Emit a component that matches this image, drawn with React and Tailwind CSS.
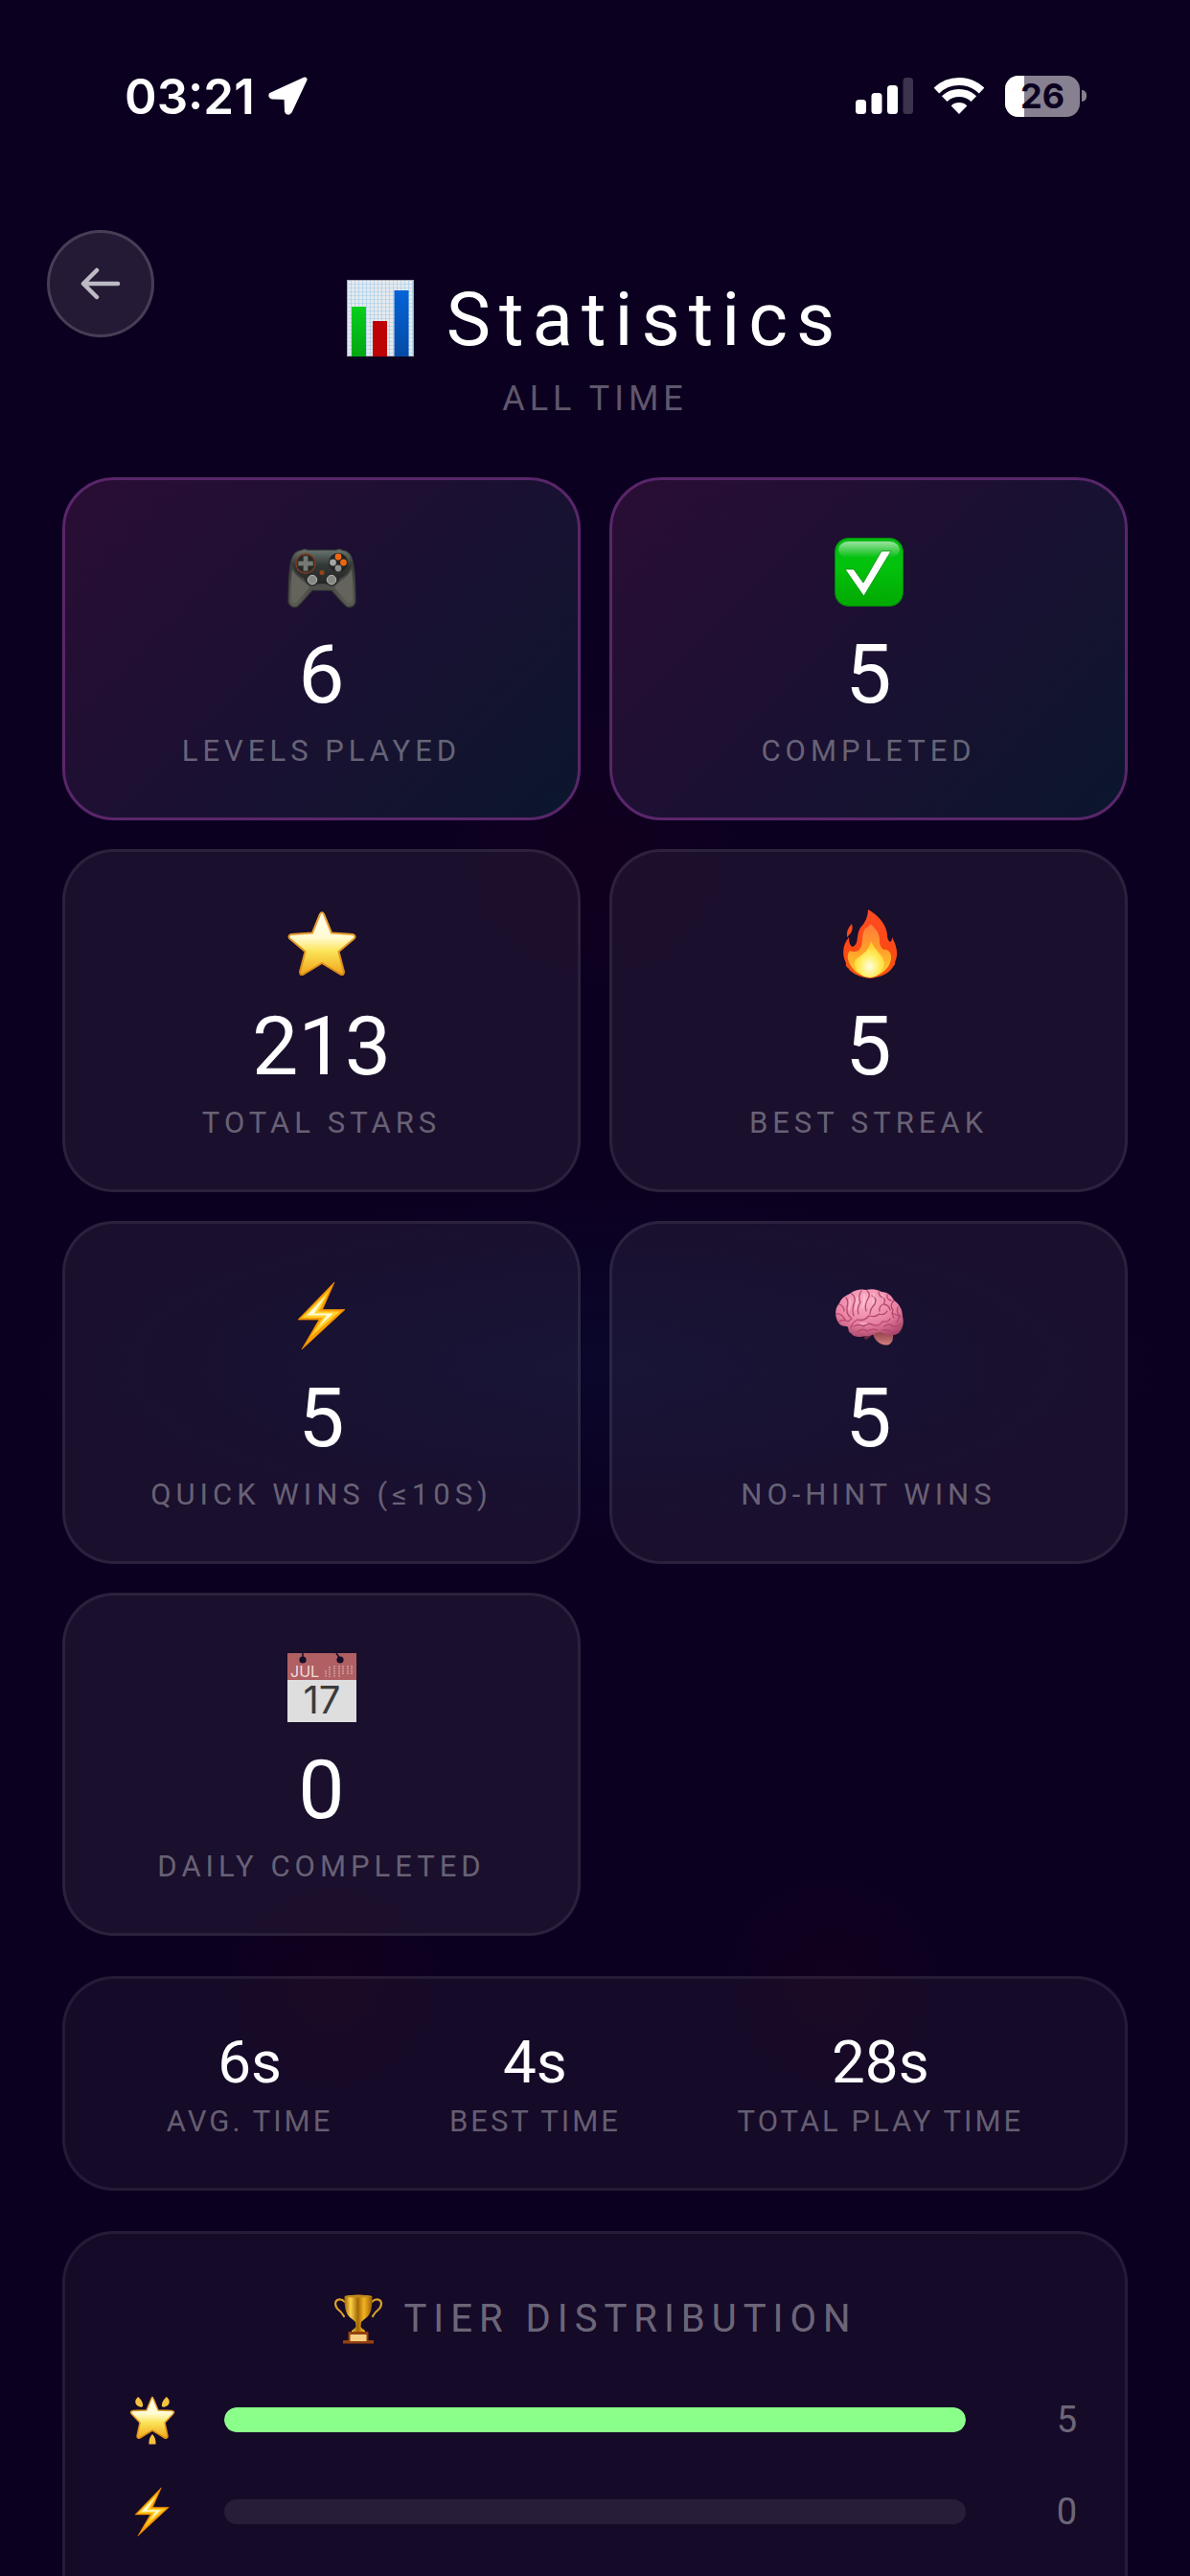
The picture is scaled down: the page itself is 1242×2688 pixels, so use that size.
import clsx from 'clsx';

/* ---------- Status bar icons ---------- */

const LocationIcon = () => (
    <svg viewBox="0 0 41 40" className="w-[41px] h-10" aria-hidden="true">
        <path d="M38 3 L3 19 Q2.500 20.500 4 21 L19 21.500 L19.500 36 Q20.500 38.500 22.500 36 Z" fill="#fff" stroke="#fff" strokeWidth="5" strokeLinejoin="round" />
    </svg>
);

const SignalIcon = () => (
    <svg viewBox="0 0 60 38" className="w-[60px] h-[38px]" aria-hidden="true">
        <rect x="0" y="23" width="11" height="15" rx="3.500" fill="#fff" />
        <rect x="16.500" y="16" width="11" height="22" rx="3.500" fill="#fff" />
        <rect x="33" y="8" width="11" height="30" rx="3.500" fill="#fff" />
        <rect x="49.500" y="0" width="10.500" height="38" rx="3.500" fill="#fff" fillOpacity="0.2" />
    </svg>
);

const WifiIcon = () => (
    <svg viewBox="0 0 52 38" className="w-[52px] h-[38px]" aria-hidden="true">
        <path d="M2.400 13.600 A34 34 0 0 1 49.600 13.600" fill="none" stroke="#fff" strokeWidth="8" />
        <path d="M10.700 22.200 A22 22 0 0 1 41.300 22.200" fill="none" stroke="#fff" strokeWidth="8" />
        <path d="M26 38 L17.700 29.400 A12 12 0 0 1 34.300 29.400 Z" fill="#fff" />
    </svg>
);

const Battery = ({ level }) => (
    <div className="flex items-center gap-[2px]">
        <div className="relative flex items-center justify-center w-[78px] h-[43px] rounded-[14px] overflow-hidden bg-white/50">
            <div className="absolute inset-y-0 left-0 bg-white" style={{ width: `${level}%` }} />
            <span className="relative font-['Inter',sans-serif] font-bold text-[36px] leading-none text-[#0c0020]">{level}</span>
        </div>
        <div className="w-[5px] h-3 rounded-r-full bg-white/50" />
    </div>
);

const BackArrow = () => (
    <svg viewBox="0 0 42 34" className="w-[42px] h-[34px]" fill="none" stroke="currentColor" strokeWidth="4.500" strokeLinecap="round" strokeLinejoin="round" aria-hidden="true">
        <path d="M39 17 H3 M17 3 L3 17 L17 31" />
    </svg>
);

/* ---------- Emoji style icons ---------- */

const ChartEmoji = ({ className }) => (
    <svg viewBox="0 0 70 80" className={className} aria-hidden="true">
        <defs>
            <pattern id="chart-grid" width="4" height="4" patternUnits="userSpaceOnUse">
                <rect width="4" height="4" fill="#e6eaee" />
                <path d="M0 0 H4 M0 0 V4" stroke="#9fcbea" strokeWidth="1.200" />
            </pattern>
            <linearGradient id="chart-green" x1="0" y1="0" x2="0" y2="1">
                <stop offset="0" stopColor="#06cf1c" />
                <stop offset="1" stopColor="#04a614" />
            </linearGradient>
            <linearGradient id="chart-blue" x1="0" y1="0" x2="0" y2="1">
                <stop offset="0" stopColor="#0464d6" />
                <stop offset="1" stopColor="#044aa6" />
            </linearGradient>
        </defs>
        <rect x="0.500" y="0.500" width="69" height="79" fill="url(#chart-grid)" stroke="#a9a9b0" />
        <rect x="5" y="28" width="15" height="52" fill="url(#chart-green)" />
        <rect x="27" y="43" width="15" height="37" fill="#bd0303" />
        <rect x="49.500" y="11" width="15" height="69" fill="url(#chart-blue)" />
    </svg>
);

const GamepadEmoji = ({ className }) => (
    <svg viewBox="0 0 72 72" className={clsx(className, 'overflow-visible')} aria-hidden="true">
        <defs>
            <linearGradient id="pad-shell" x1="0" y1="0" x2="0" y2="1">
                <stop offset="0" stopColor="#6f716b" />
                <stop offset="0.250" stopColor="#3c3e3b" />
                <stop offset="1" stopColor="#5c5c56" />
            </linearGradient>
            <linearGradient id="pad-top" x1="0" y1="0" x2="0" y2="1">
                <stop offset="0" stopColor="#64706b" />
                <stop offset="0.400" stopColor="#333836" />
                <stop offset="1" stopColor="#242524" />
            </linearGradient>
        </defs>
        <path d="M15 13 Q18 11 21 13 H51 Q54 11 57 13 Q66 14 68 24 C71 38 71 52 71 67 Q69 74 62 72 C56 67 52 61 46 55 H26 C20 61 16 67 10 72 Q3 74 1 67 C1 52 1 38 4 24 Q6 14 15 13 Z" fill="url(#pad-shell)" stroke="#393a37" strokeWidth="1.200" />
        <path d="M5 33 C4 43 3 54 4 66 Q7 70 10 67 L23 52 C17 44 9 42 5 33 Z M67 33 C68 43 69 54 68 66 Q65 70 62 67 L49 52 C55 44 63 42 67 33 Z" fill="#64645d" />
        <path d="M15 14 H57 Q68 18 66 31 Q62 40 55 42 Q52 50 45 50 Q41 48 36 48 Q31 48 27 50 Q20 50 17 42 Q10 40 6 31 Q4 18 15 14 Z" fill="url(#pad-top)" />
        <circle cx="19" cy="27" r="10" fill="#252827" stroke="#7d3b1e" strokeWidth="1.300" />
        <path d="M16.500 19 h5 v5.500 h5.500 v5 h-5.500 v5.500 h-5 v-5.500 h-5.500 v-5 h5.500 Z" fill="#747972" stroke="#414541" strokeWidth="0.800" />
        <circle cx="53" cy="26" r="10" fill="#212423" />
        <circle cx="53" cy="20" r="3.400" fill="#ef6512" />
        <circle cx="58.500" cy="26" r="3.400" fill="#ef6512" />
        <circle cx="47.500" cy="26" r="3.400" fill="#a3a5a3" />
        <circle cx="53" cy="32" r="3.400" fill="#8e908d" />
        <circle cx="36" cy="36.500" r="2.500" fill="#984416" />
        <circle cx="26" cy="44" r="6.500" fill="#2c2d2c" />
        <circle cx="46" cy="44" r="6.500" fill="#2c2d2c" />
        <circle cx="26" cy="44" r="4.700" fill="#858983" stroke="#b9bab5" />
        <circle cx="46" cy="44" r="4.700" fill="#858983" stroke="#b9bab5" />
    </svg>
);

const CheckEmoji = ({ className }) => (
    <svg viewBox="0 0 72 72" className={className} aria-hidden="true">
        <defs>
            <linearGradient id="check-bg" x1="0" y1="0" x2="0" y2="1">
                <stop offset="0" stopColor="#04b913" />
                <stop offset="0.400" stopColor="#02c30c" />
                <stop offset="1" stopColor="#02a802" />
            </linearGradient>
            <linearGradient id="check-shine" x1="0" y1="0" x2="0" y2="1">
                <stop offset="0" stopColor="#fff" stopOpacity="0.600" />
                <stop offset="1" stopColor="#fff" stopOpacity="0" />
            </linearGradient>
        </defs>
        <rect x="0.500" y="0.500" width="71" height="71" rx="14" fill="url(#check-bg)" stroke="#057d0b" />
        <rect x="4" y="4" width="64" height="17" rx="11" fill="url(#check-shine)" />
        <path d="M11 33 H20 L30 47 L49 14 H59 L30.500 61 Z" fill="#fff" stroke="#0a8e10" strokeWidth="0.800" />
    </svg>
);

const StarEmoji = ({ className }) => (
    <svg viewBox="0 0 72 72" className={className} aria-hidden="true">
        <defs>
            <linearGradient id="star-fill" x1="0" y1="0" x2="0" y2="1">
                <stop offset="0" stopColor="#fffdf0" />
                <stop offset="0.400" stopColor="#fffbd2" />
                <stop offset="0.620" stopColor="#fbe457" />
                <stop offset="1" stopColor="#f2a41b" />
            </linearGradient>
            <linearGradient id="star-edge" x1="0" y1="0" x2="0" y2="1">
                <stop offset="0" stopColor="#eba534" />
                <stop offset="1" stopColor="#d98a17" />
            </linearGradient>
        </defs>
        <path d="M34 5 Q36 1.500 38 5 L46 24.500 L68 26 Q72 27.500 69.500 30.500 L53.500 44 L59 65 Q59 69.500 55 67.500 L36 56 L17 67.500 Q13 69.500 13 65 L18.500 44 L2.500 30.500 Q0 27.500 4 26 L26 24.500 Z" fill="url(#star-fill)" stroke="url(#star-edge)" strokeWidth="2" strokeLinejoin="round" />
    </svg>
);

const FireEmoji = ({ className }) => (
    <svg viewBox="0 0 72 72" className={className} aria-hidden="true">
        <defs>
            <linearGradient id="fire-outer" x1="0" y1="0" x2="0" y2="1">
                <stop offset="0" stopColor="#ff4a22" />
                <stop offset="0.550" stopColor="#fb4a16" />
                <stop offset="1" stopColor="#f3550e" />
            </linearGradient>
            <linearGradient id="fire-inner" x1="0" y1="0" x2="0" y2="1">
                <stop offset="0" stopColor="#ff7a3a" />
                <stop offset="0.550" stopColor="#ffa42a" />
                <stop offset="1" stopColor="#ffd32e" />
            </linearGradient>
            <radialGradient id="fire-core" cx="0.500" cy="0.700" r="0.600">
                <stop offset="0" stopColor="#fffde0" />
                <stop offset="0.500" stopColor="#fff06a" />
                <stop offset="1" stopColor="#ffd027" />
            </radialGradient>
        </defs>
        <path d="M35 0 C46 6 54 16 55 26 Q55 32 58 34 Q60 33 60 29 C65 38 67 47 63 55 Q64 57 61 60 C56 68 46 71 37 72 C27 71 18 67 14 61 Q11 59 12 56 C7 46 9 36 15 29 Q15 38 19 39 C26 36 22 27 27 19 Q35 11 35 0 Z" fill="url(#fire-outer)" />
        <path d="M18 15 C20 22 17 25 13 29 Q12 21 18 15 Z" fill="#fb4a1c" />
        <path d="M37 15 C43 19 48 26 47 35 Q49 43 54 42 Q60 44 59 52 C57 63 47 70 37 70 C25 70 17 62 14 52 Q13 46 16 43 Q21 46 26 42 C31 36 27 27 32 20 Q36 18 37 15 Z" fill="url(#fire-inner)" />
        <path d="M38 33 C42 43 51 47 52 56 C51 65 44 71 37 71 C29 71 22 65 21 57 C21 50 26 51 30 46 Q36 42 38 33 Z" fill="url(#fire-core)" />
    </svg>
);

const BoltEmoji = ({ className }) => (
    <svg viewBox="0 0 72 72" className={className} aria-hidden="true">
        <path d="M49 1 L11 40 H33 L15 71 L60 29.500 H36.500 Z" fill="#fb9c04" stroke="#e98a00" strokeWidth="0.800" strokeLinejoin="round" />
        <path d="M44 9 L15 38 H37 L24 58 L55 31.500 H32.500 Z" fill="#ffd12c" />
        <path d="M40 15 L20 35.500 H41 L33 47 L48 33.500 H28 Z" fill="#fffbd9" />
    </svg>
);

const BrainEmoji = ({ className }) => (
    <svg viewBox="0 0 72 72" className={className} aria-hidden="true">
        <defs>
            <radialGradient id="brain-fill" cx="0.450" cy="0.250" r="0.800">
                <stop offset="0" stopColor="#fcb3c8" />
                <stop offset="0.600" stopColor="#e880a2" />
                <stop offset="1" stopColor="#a94468" />
            </radialGradient>
            <linearGradient id="brain-stem" x1="0" y1="0" x2="0" y2="1">
                <stop offset="0" stopColor="#8f3c45" />
                <stop offset="1" stopColor="#d27f80" />
            </linearGradient>
        </defs>
        <path d="M30 54 L32 61 L36 59 L40 55 Z" fill="#6d2b45" />
        <path d="M40 55 C43 64 50 68 57 66 Q62 63 61 54 L48 52 Z" fill="url(#brain-stem)" />
        <path d="M4 43 C0 37 0 28 5 23 C7 17 12 15 16 13 C22 8 29 8 33 9 C40 7 46 9 49 11 C55 11 60 15 62 20 C68 24 71 30 71 37 C73 43 71 50 67 54 C61 58 54 56 48 53 C41 54 38 58 32 57 C26 59 19 58 17 54 C13 53 16 47 12 47 Q6 47 4 43 Z" fill="url(#brain-fill)" />
        <g fill="none" stroke="#b5486d" strokeWidth="1.300" strokeLinecap="round">
            <path d="M5 24 Q10 26 10 31 M2 34 Q7 33 11 40 M5 42 Q9 39 14 42 L18 39" />
            <path d="M12 17 Q15 21 13 27 Q12 34 17 38 M18 13 Q23 17 20 24 Q18 31 20 36" />
            <path d="M28 10 Q24 16 27 22 Q23 28 25 34 M34 10 Q38 13 35 18 Q31 25 33 31" />
            <path d="M39 15 Q45 18 42 24 Q37 29 37 34 M46 11 Q46 16 51 17 Q54 20 51 24 Q46 26 47 31" />
            <path d="M55 14 Q54 19 59 20 M62 20 Q57 25 61 30 Q59 34 62 38 M52 24 Q57 25 58 30" />
            <path d="M17 49 Q18 43 24 40 Q31 42 36 36 Q43 38 47 34 Q52 36 55 31 M66 27 Q64 32 68 36 L65 43" />
            <path d="M20 47 Q26 44 30 47 Q36 42 41 46 Q47 47 50 42 Q56 43 58 39 M24 53 Q29 48 34 52 Q40 49 45 51" />
            <path d="M52 47 Q57 43 61 47 Q65 48 69 45 M50 51 Q56 50 60 53 M60 33 L69 37" />
        </g>
        <g fill="none" stroke="#ffd0dc" strokeWidth="2" strokeLinecap="round" opacity="0.450">
            <path d="M16 19 Q17 25 15 29 M24 17 Q23 23 22 29 M31 14 Q32 19 29 27 M41 13 L40 22 M50 14 L51 17 M27 44 L33 44" />
        </g>
    </svg>
);

const CalendarEmoji = ({ className }) => (
    <svg viewBox="0 0 72 72" className={clsx(className, 'overflow-visible')} aria-hidden="true">
        <rect width="72" height="72" fill="#dedede" />
        <rect width="72" height="28" fill="#b06062" />
        <path d="M16 0 V6 M51 0 L55 6" stroke="#170c2a" strokeWidth="1.500" />
        <circle cx="16" cy="7" r="3.600" fill="#170c2a" />
        <circle cx="55" cy="7" r="3.600" fill="#170c2a" />
        <path d="M40 18 V25 M44 14 V25 M49 13 V25 M54 13 V25 M58 13 V22 M63 13 V22 M67 13 V22" stroke="#dcb1b1" strokeWidth="2" strokeDasharray="1.500 1" opacity="0.700" />
        <text x="3" y="25" fill="#eedede" fontFamily="Inter, sans-serif" fontSize="16">JUL</text>
        <text x="36" y="63" textAnchor="middle" fill="#3c3c3c" fontFamily="Inter, sans-serif" fontSize="40">17</text>
    </svg>
);

const TrophyEmoji = ({ className }) => (
    <svg viewBox="0 0 52 52" className={className} aria-hidden="true">
        <defs>
            <linearGradient id="trophy-gold" x1="0" y1="0" x2="1" y2="0">
                <stop offset="0" stopColor="#9a6204" />
                <stop offset="0.220" stopColor="#ffd24a" />
                <stop offset="0.480" stopColor="#a26a06" />
                <stop offset="0.700" stopColor="#f3b321" />
                <stop offset="0.850" stopColor="#c98b10" />
                <stop offset="1" stopColor="#8e5a02" />
            </linearGradient>
        </defs>
        <path d="M12 8 Q8 4 4 6 Q0 9 4 15 Q9 19 11 23 M40 8 Q44 4 48 6 Q52 9 48 15 Q43 19 41 23" fill="none" stroke="#d9a12c" strokeWidth="2.200" strokeLinecap="round" />
        <path d="M11.500 2 Q26 -1 40.500 2 Q41 18 36 23 Q31 27 29 29 L28.500 34 Q30 36 33 38 V40 H19 V38 Q22 36 23.500 34 L23 29 Q21 27 16 23 Q11 18 11.500 2 Z" fill="url(#trophy-gold)" />
        <ellipse cx="26" cy="2.300" rx="14" ry="1.500" fill="#c08a1a" />
        <path d="M15.500 39 H36.500 V48 H42 V51.500 H10 V48 H15.500 Z" fill="#93400f" />
        <rect x="17.500" y="42" width="17" height="7" fill="#f6cf83" />
    </svg>
);

const GlowingStarEmoji = ({ className }) => (
    <svg viewBox="0 0 52 52" className={className} aria-hidden="true">
        <path d="M25 4 Q26 1 27 4 L32 16 L46 16.500 Q50 17.500 47.500 20 L39 29 L42 43 Q42 46 39 45 L26 37 L13 45 Q10 46 10 43 L13 29 L4.500 20 Q2 17.500 6 16.500 L20 16 Z" fill="url(#star-fill)" stroke="url(#star-edge)" strokeWidth="1.500" strokeLinejoin="round" />
        <path d="M11 2 Q6 7 10 11 Q14 14 16 12 Q17 7 11 2 Z M41 2 Q46 7 42 11 Q38 14 36 12 Q35 7 41 2 Z M26 41 Q30 45 29.500 51.500 H22.500 Q22 45 26 41 Z" fill="#f5c141" />
    </svg>
);

/* ---------- Data ---------- */

const stats = [
    { icon: GamepadEmoji, value: 6, label: 'LEVELS PLAYED', highlight: true },
    { icon: CheckEmoji, value: 5, label: 'COMPLETED', highlight: true },
    { icon: StarEmoji, value: 213, label: 'TOTAL STARS' },
    { icon: FireEmoji, value: 5, label: 'BEST STREAK' },
    { icon: BoltEmoji, value: 5, label: 'QUICK WINS (≤10S)' },
    { icon: BrainEmoji, value: 5, label: 'NO-HINT WINS' },
    { icon: CalendarEmoji, value: 0, label: 'DAILY COMPLETED' },
];

const times = [
    { value: '6s', label: 'AVG. TIME' },
    { value: '4s', label: 'BEST TIME' },
    { value: '28s', label: 'TOTAL PLAY TIME' },
];

const tiers = [
    { icon: GlowingStarEmoji, count: 5, percent: 100 },
    { icon: BoltEmoji, count: 0, percent: 0 },
];

/* ---------- Sections ---------- */

const StatusBar = () => (
    <div className="flex items-center justify-between pt-[70px] pb-[110px] pl-[130px] pr-[108px]">
        <div className="flex items-center gap-[14px] h-[60px]">
            <span className="font-['Inter',sans-serif] font-semibold text-[51px] leading-none text-white">03:21</span>
            <LocationIcon />
        </div>
        <div className="flex items-center gap-[22px]">
            <SignalIcon />
            <WifiIcon />
            <Battery level={26} />
        </div>
    </div>
);

const StatCard = ({ icon: Icon, value, label, highlight }) => (
    <div
        className={clsx(
            'flex flex-col items-center rounded-[54px] border-[3px] pt-[60px] pb-[51px]',
            highlight
                ? 'border-[#5a266b] bg-linear-135 from-[#2a0d34] via-[#1b1032] to-[#0a162d]'
                : 'border-white/8 bg-white/6'
        )}
    >
        <Icon className="size-[72px]" />
        <div className="mt-7 text-[86px] leading-[86px] text-white">{value}</div>
        <div className="mt-[19px] text-[31px] leading-9 tracking-[5px] text-white/35">{label}</div>
    </div>
);

const TierRow = ({ icon: Icon, count, percent }) => (
    <div className="flex items-center gap-[30px] h-[52px]">
        <div className="w-[90px] flex justify-center">
            <Icon className="size-[52px]" />
        </div>
        <div className="flex-1 h-[26px] rounded-[13px] bg-white/8 overflow-hidden">
            <div className="h-full rounded-[13px] bg-[#8aff8a]" style={{ width: `${percent}%` }} />
        </div>
        <div className="w-[90px] pr-1 text-right text-[38px] leading-[52px] text-white/40">{count}</div>
    </div>
);

const App = () => (
    <div className="min-h-screen flex flex-col font-['Roboto',sans-serif] bg-[#0c0020] bg-[radial-gradient(ellipse_50%_7%_at_50%_53%,rgba(0,40,90,0.18),transparent),radial-gradient(circle_at_28%_77%,rgba(70,0,10,0.1),transparent_120px),radial-gradient(circle_at_70%_77%,rgba(70,0,10,0.1),transparent_120px),radial-gradient(circle_at_50%_33%,rgba(70,0,10,0.08),transparent_160px)]">
        <StatusBar />

        <header className="flex items-start justify-between px-[49px]">
            <button type="button" aria-label="Back" className="flex items-center justify-center size-28 rounded-full border-[3px] border-white/16 bg-white/10 text-white/70">
                <BackArrow />
            </button>
            <div className="flex flex-col items-center pt-[52px]">
                <h1 className="flex items-start gap-[34px] text-[78px] leading-[84px] tracking-[9px] text-white">
                    <ChartEmoji className="w-[70px] h-20" />
                    Statistics
                </h1>
                <p className="mt-5 text-[36px] leading-10 tracking-[5px] text-white/35">ALL TIME</p>
            </div>
            <div className="w-28" />
        </header>

        <main className="flex-1 flex flex-col gap-[42px] px-[65px] pt-[62px]">
            <section className="grid grid-cols-2 gap-[30px]">
                {stats.map((stat) => (
                    <StatCard key={stat.label} {...stat} />
                ))}
            </section>

            <section className="flex justify-around rounded-[54px] border-[3px] border-white/7 bg-white/4 px-[45px] pt-14 pb-[51px]">
                {times.map(({ value, label }) => (
                    <div key={label} className="flex flex-col items-center">
                        <div className="text-[62px] leading-[62px] text-white">{value}</div>
                        <div className="mt-[13px] text-[31px] leading-9 tracking-[3px] text-white/35">{label}</div>
                    </div>
                ))}
            </section>

            {/* Tier panel runs on below the fold */}
            <section className="flex-1 rounded-t-[54px] border-[3px] border-b-0 border-white/7 bg-white/4 px-[46px] pt-[63px] pb-11">
                <h2 className="flex items-center justify-center gap-[22px] text-[40px] leading-[52px] tracking-[7px] text-white/40">
                    <TrophyEmoji className="size-[52px]" />
                    TIER DISTRIBUTION
                </h2>
                <div className="mt-[53px] flex flex-col gap-11">
                    {tiers.map((tier, i) => (
                        <TierRow key={i} {...tier} />
                    ))}
                </div>
            </section>
        </main>
    </div>
);

export default App;
